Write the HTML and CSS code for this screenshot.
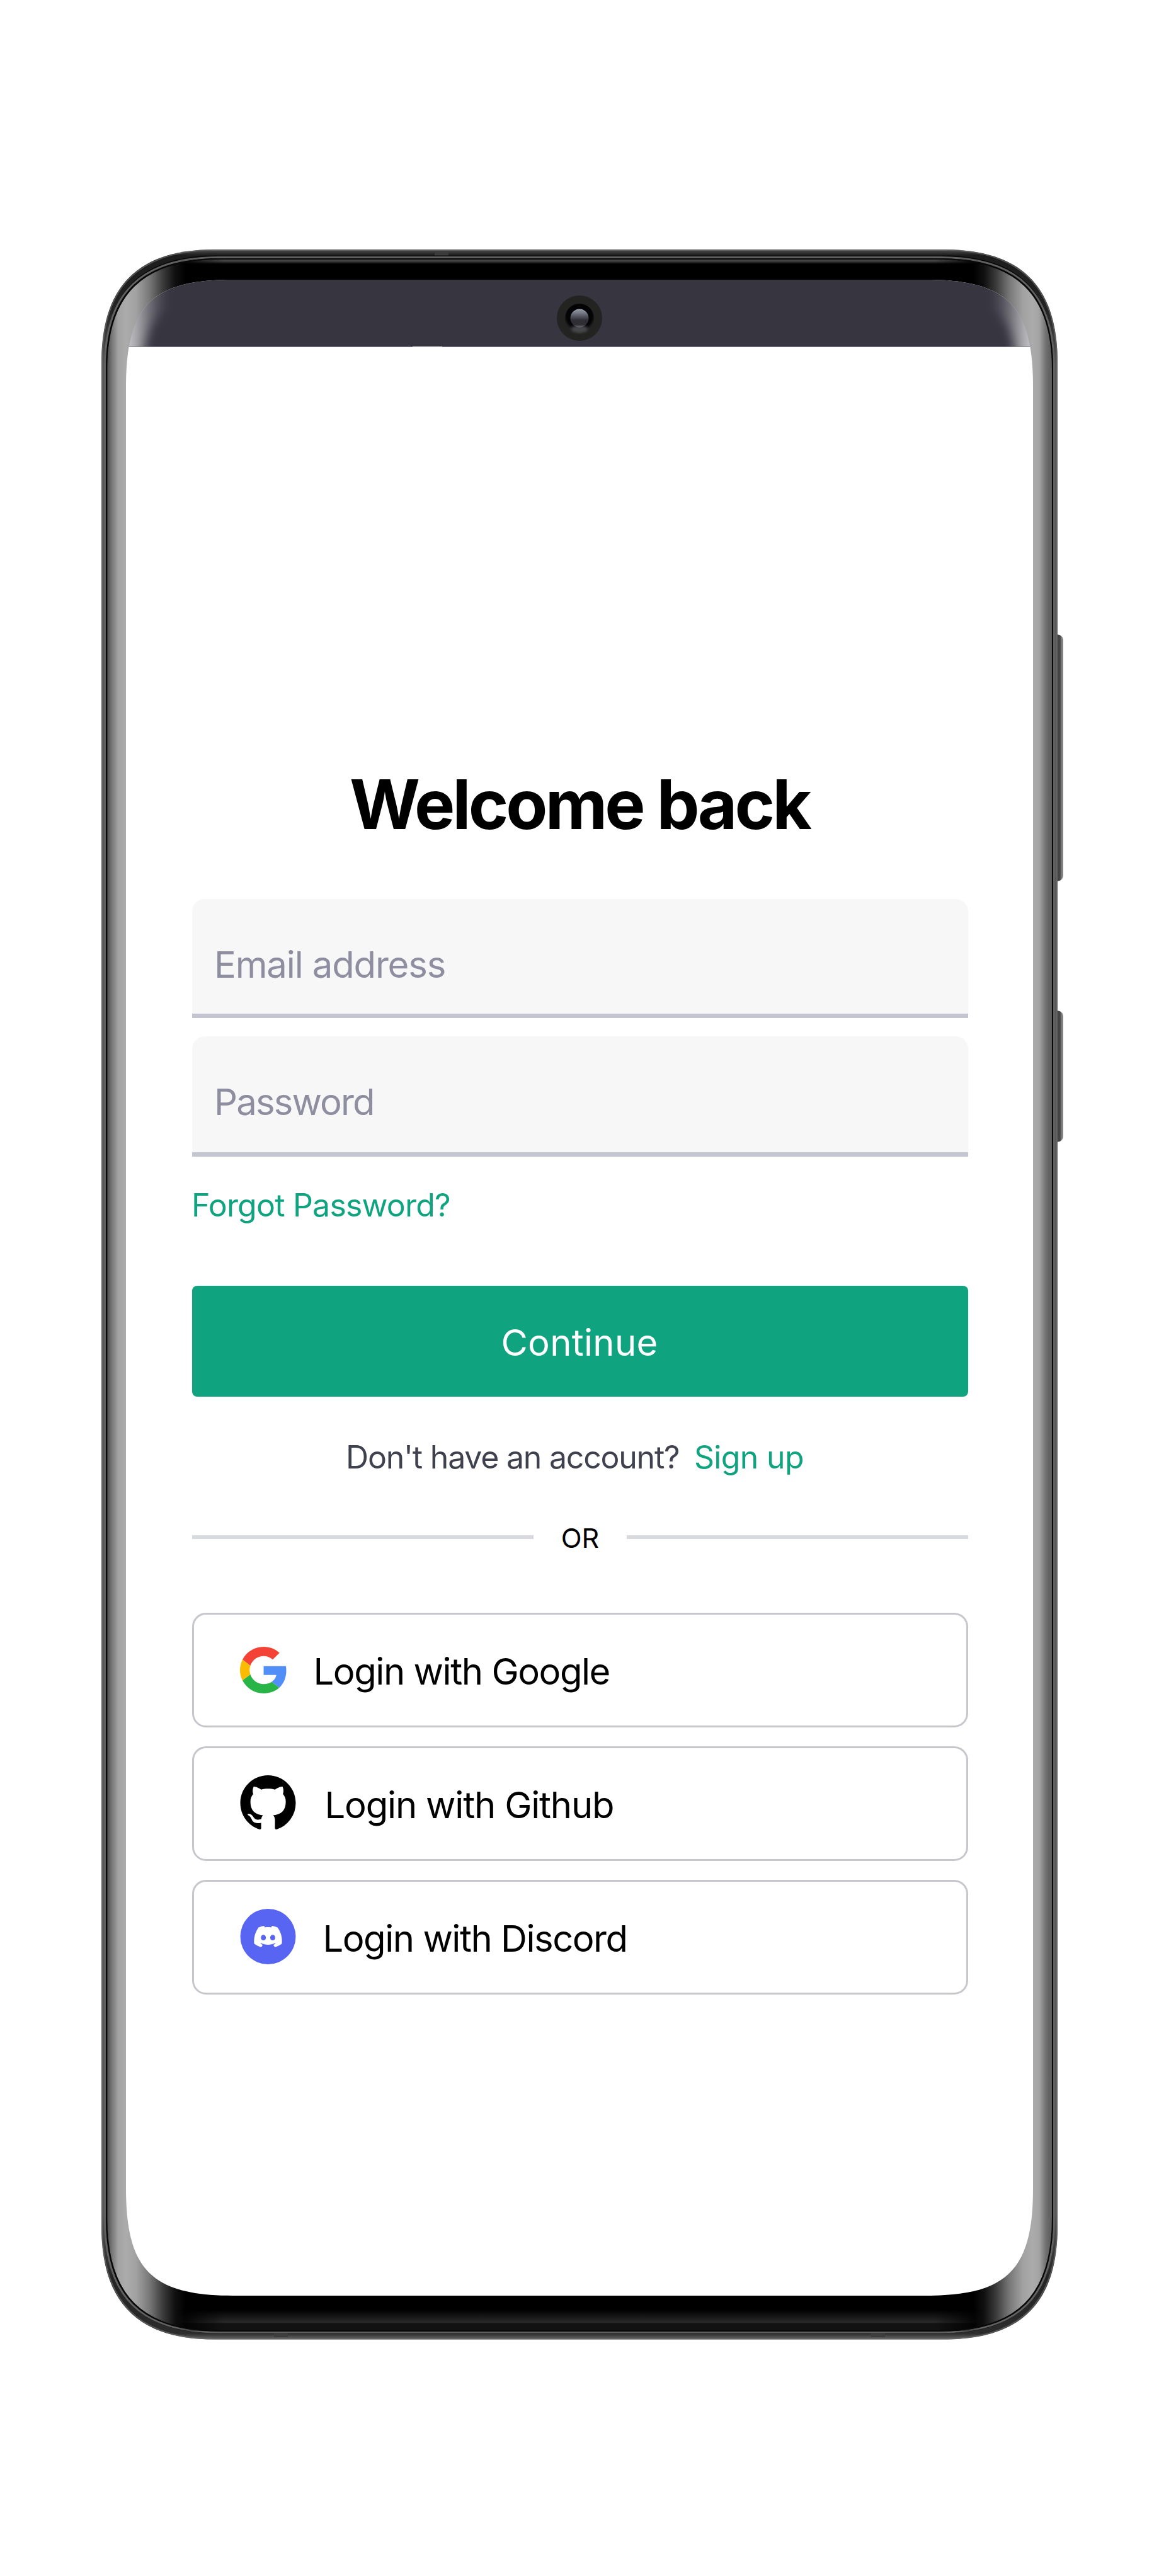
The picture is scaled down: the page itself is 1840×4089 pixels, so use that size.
FILE: index.html
```html
<!DOCTYPE html>
<html lang="en">
<head>
<meta charset="utf-8">
<title>Welcome back</title>
<link rel="stylesheet" href="styles.css">
</head>
<body>
<div class="device">
  <svg class="device-frame" viewBox="0 0 1840 4089" width="1840" height="4089" aria-hidden="true">
    <defs>
      <linearGradient id="glass" gradientUnits="userSpaceOnUse" x1="161" y1="0" x2="1679" y2="0">
        <stop offset="0.006" stop-color="#4c4c4c"/>
        <stop offset="0.011" stop-color="#777"/>
        <stop offset="0.0175" stop-color="#a3a3a3"/>
        <stop offset="0.026" stop-color="#ababab"/>
        <stop offset="0.036" stop-color="#a2a2a2"/>
        <stop offset="0.05" stop-color="#797979"/>
        <stop offset="0.064" stop-color="#3c3c3c"/>
        <stop offset="0.077" stop-color="#101010"/>
        <stop offset="0.088" stop-color="#000"/>
        <stop offset="0.912" stop-color="#000"/>
        <stop offset="0.923" stop-color="#101010"/>
        <stop offset="0.936" stop-color="#3c3c3c"/>
        <stop offset="0.95" stop-color="#797979"/>
        <stop offset="0.964" stop-color="#a2a2a2"/>
        <stop offset="0.974" stop-color="#ababab"/>
        <stop offset="0.981" stop-color="#a3a3a3"/>
        <stop offset="0.988" stop-color="#6f6f6f"/>
        <stop offset="0.994" stop-color="#5a5a5a"/>
      </linearGradient>
      <linearGradient id="rim" gradientUnits="userSpaceOnUse" x1="0" y1="396" x2="0" y2="3714">
        <stop offset="0" stop-color="#505050"/>
        <stop offset="0.0028" stop-color="#1c1c1c"/>
        <stop offset="0.03" stop-color="#242424"/>
        <stop offset="0.055" stop-color="#585858"/>
        <stop offset="0.94" stop-color="#585858"/>
        <stop offset="0.97" stop-color="#242424"/>
        <stop offset="0.997" stop-color="#2c2c2c"/>
        <stop offset="1" stop-color="#6c6c6c"/>
      </linearGradient>
      <linearGradient id="topGlow" x1="0" y1="0" x2="0" y2="1">
        <stop offset="0" stop-color="#4a4a4a"/>
        <stop offset="0.45" stop-color="#404040"/>
        <stop offset="1" stop-color="#000"/>
      </linearGradient>
      <linearGradient id="bottomGlow" x1="0" y1="0" x2="0" y2="1">
        <stop offset="0" stop-color="#000"/>
        <stop offset="0.62" stop-color="#2b2b2b"/>
        <stop offset="0.64" stop-color="#121212"/>
        <stop offset="1" stop-color="#121212"/>
      </linearGradient>
      <linearGradient id="glowEnds" gradientUnits="userSpaceOnUse" x1="280" y1="0" x2="1560" y2="0">
        <stop offset="0" stop-color="#fff" stop-opacity="0"/>
        <stop offset="0.06" stop-color="#fff"/>
        <stop offset="0.94" stop-color="#fff"/>
        <stop offset="1" stop-color="#fff" stop-opacity="0"/>
      </linearGradient>
      <mask id="glowMask" maskUnits="userSpaceOnUse" x="280" y="400" width="1280" height="3310">
        <rect x="280" y="400" width="1280" height="3310" fill="url(#glowEnds)"/>
      </mask>
      <linearGradient id="edgeFade" gradientUnits="userSpaceOnUse" x1="200" y1="0" x2="1640" y2="0">
        <stop offset="0" stop-color="#fff" stop-opacity="0.75"/>
        <stop offset="0.015" stop-color="#fff" stop-opacity="0.5"/>
        <stop offset="0.028" stop-color="#fff" stop-opacity="0.24"/>
        <stop offset="0.045" stop-color="#fff" stop-opacity="0"/>
        <stop offset="0.955" stop-color="#fff" stop-opacity="0"/>
        <stop offset="0.972" stop-color="#fff" stop-opacity="0.24"/>
        <stop offset="0.985" stop-color="#fff" stop-opacity="0.5"/>
        <stop offset="1" stop-color="#fff" stop-opacity="0.75"/>
      </linearGradient>
      <linearGradient id="key" x1="0" y1="0" x2="1" y2="0">
        <stop offset="0" stop-color="#3c3c3c"/>
        <stop offset="0.6" stop-color="#474747"/>
        <stop offset="0.72" stop-color="#777"/>
        <stop offset="1" stop-color="#8a8a8a"/>
      </linearGradient>
      <linearGradient id="lens" x1="0" y1="0" x2="0" y2="1">
        <stop offset="0" stop-color="#9ba3ae"/>
        <stop offset="0.25" stop-color="#70727e"/>
        <stop offset="0.6" stop-color="#302f37"/>
        <stop offset="0.85" stop-color="#2c2c31"/>
        <stop offset="1" stop-color="#6c6c71"/>
      </linearGradient>
      <radialGradient id="lensRing" cx="0.5" cy="0.4" r="0.6">
        <stop offset="0" stop-color="#000"/>
        <stop offset="0.75" stop-color="#050508"/>
        <stop offset="1" stop-color="#2c2d2c"/>
      </radialGradient>
      <filter id="soft" x="-5%" y="-5%" width="110%" height="110%"><feGaussianBlur stdDeviation="8"/></filter>
      <filter id="softer" x="-60%" y="-60%" width="220%" height="220%"><feGaussianBlur stdDeviation="2"/></filter>
      <clipPath id="screenClip"><path id="screenShape" d="M200 614C200 485 241 444 370 444H1470C1599 444 1640 485 1640 614V3474C1640 3603 1599 3644 1470 3644H370C241 3644 200 3603 200 3474Z"/></clipPath>
      <clipPath id="barClip"><path d="M180 444H1660V550H180Z"/></clipPath>
    </defs>

    <path d="M1676 1007C1684 1007 1688 1011 1688 1017V1389C1688 1395 1684 1399 1676 1399Z" fill="url(#key)"/>
    <path d="M1676 1604C1684 1604 1688 1608 1688 1614V1803C1688 1809 1684 1813 1676 1813Z" fill="url(#key)"/>

    <path d="M161 576C161 454 219 396 341 396H1499C1621 396 1679 454 1679 576V3533.5C1679 3655.500 1621 3713.500 1499 3713.500H341C219 3713.500 161 3655.500 161 3533.500Z" fill="url(#rim)"/>
    <path d="M162 576C162 455 220 397 341 397H1499C1620 397 1678 455 1678 576V3533C1678 3654 1620 3712.500 1499 3712.500H341C220 3712.500 162 3654 162 3533Z" fill="none" stroke="#6a6a6a" stroke-opacity="0.7" stroke-width="2"/>
    <path d="M690 400h22v6h-22zM435 3704h22v6h-22zM1383 3704h22v6h-22z" fill="#3c3c3c"/>
    <path d="M166.500 584C166.500 462 223 405.500 345 405.500H1495C1617 405.500 1674 462 1674 584V3522C1674 3646 1618 3703.500 1495 3703.500H345C222 3703.500 166.500 3646 166.500 3522Z" fill="#080808"/>
    <path d="M166.500 584C166.500 464 225 408.500 347 408.500H1493C1615 408.500 1673.500 464 1673.500 584V3522C1673.500 3646 1617 3702 1493 3702H347C223 3702 166.500 3646 166.500 3522Z" fill="none" stroke="#606060" stroke-width="3"/>
    <path d="M169.300 586C169.300 466 227 411 349 411H1491C1613 411 1671 466 1671 586V3520C1671 3644 1615 3700 1491 3700H349C225 3700 169.300 3644 169.300 3520Z" fill="url(#glass)"/>
    <g mask="url(#glowMask)">
      <rect x="280" y="411" width="1280" height="8" fill="url(#topGlow)"/>
      <rect x="280" y="3666" width="1280" height="34" fill="url(#bottomGlow)"/>
    </g>
    <path d="M169.300 586C169.300 466 227 411 349 411H1491C1613 411 1671 466 1671 586V3520C1671 3644 1615 3700 1491 3700H349C225 3700 169.300 3644 169.300 3520Z" fill="none" stroke="#080808" stroke-width="2"/>

    <use href="#screenShape" fill="#fff"/>
    <g clip-path="url(#screenClip)">
      <rect x="190" y="444" width="1460" height="106" fill="#363540"/>
      <g clip-path="url(#barClip)">
        <use href="#screenShape" fill="none" stroke="url(#edgeFade)" stroke-width="50" filter="url(#soft)"/>
      </g>
      <rect x="200" y="550" width="1440" height="1" fill="#85848c"/>
      <rect x="655" y="549" width="47" height="2" fill="#96959e"/>
    </g>

    <circle cx="920" cy="505" r="36" fill="#232422"/>
    <circle cx="920" cy="505" r="23" fill="url(#lensRing)"/>
    <ellipse cx="920" cy="522" rx="13" ry="6" fill="#55565a" opacity="0.8" filter="url(#softer)"/>
    <circle cx="920" cy="505" r="14.500" fill="url(#lens)"/>
  </svg>

  <main class="screen">
    <h1 class="title">Welcome back</h1>
    <form class="login">
      <input class="field field-email" type="text" placeholder="Email address" aria-label="Email address">
      <input class="field field-password" type="text" placeholder="Password" aria-label="Password">
      <a class="forgot">Forgot Password?</a>
      <button class="continue" type="button">Continue</button>
    </form>
    <p class="signup"><span class="signup-text">Don't have an account?</span><a class="signup-link">Sign up</a></p>
    <div class="divider"><span class="divider-text">OR</span></div>
    <div class="providers">
      <button class="provider google" type="button">
        <svg class="icon-google" viewBox="0 0 47 48" preserveAspectRatio="none" aria-hidden="true">
          <path fill="#f44336" d="M24 9.500c3.540 0 6.710 1.220 9.210 3.600l6.850-6.850C35.900 2.380 30.470 0 24 0 14.620 0 6.510 5.380 2.560 13.220l7.980 6.190C12.430 13.720 17.740 9.500 24 9.500z"/>
          <path fill="#518ef8" d="M46.980 24.550c0-1.570-.15-3.090-.38-4.550H24v9.020h12.940c-.58 2.960-2.260 5.480-4.780 7.180l7.730 6c4.510-4.180 7.090-10.360 7.090-17.650z"/>
          <path fill="#fbbb00" d="M10.530 28.590c-.48-1.450-.76-2.990-.76-4.590s.27-3.140.76-4.590l-7.980-6.190C.92 16.460 0 20.120 0 24c0 3.880.92 7.540 2.560 10.780l7.970-6.190z"/>
          <path fill="#28b446" d="M24 48c6.480 0 11.930-2.130 15.890-5.810l-7.730-6c-2.150 1.450-4.920 2.300-8.160 2.300-6.260 0-11.570-4.220-13.470-9.910l-7.980 6.190C6.510 42.620 14.620 48 24 48z"/>
        </svg>
        <span>Login with Google</span>
      </button>
      <button class="provider github" type="button">
        <svg class="icon-round" viewBox="0 0 16 16" aria-hidden="true">
          <path d="M8 0C3.580 0 0 3.580 0 8c0 3.540 2.290 6.530 5.470 7.590.4.07.55-.17.55-.38 0-.19-.01-.82-.01-1.490-2.010.37-2.530-.49-2.690-.94-.09-.23-.48-.94-.82-1.130-.28-.15-.68-.52-.01-.53.63-.01 1.080.58 1.230.82.72 1.210 1.870.87 2.330.66.07-.52.28-.87.51-1.070-1.780-.2-3.640-.89-3.640-3.950 0-.87.31-1.590.82-2.150-.08-.2-.36-1.020.08-2.120 0 0 .67-.21 2.200.82.64-.18 1.320-.27 2-.27s1.360.09 2 .27c1.530-1.040 2.200-.82 2.200-.82.44 1.100.16 1.920.08 2.120.51.56.82 1.270.82 2.150 0 3.070-1.870 3.750-3.650 3.950.29.25.54.73.54 1.480 0 1.070-.01 1.930-.01 2.200 0 .21.15.46.55.38A8.010 8.010 0 0 0 16 8c0-4.420-3.580-8-8-8z"/>
        </svg>
        <span>Login with Github</span>
      </button>
      <button class="provider discord" type="button">
        <svg class="icon-round" viewBox="0 0 89 89" aria-hidden="true">
          <circle cx="44.500" cy="44.500" r="44.500" fill="#5865f2"/>
          <path transform="translate(22.100 22) scale(1.870)" fill="#fff" d="M20.317 4.3698a19.7913 19.7913 0 00-4.8851-1.5152.0741.0741 0 00-.0785.0371c-.211.3753-.4447.8648-.6083 1.2495-1.8447-.2762-3.68-.2762-5.4868 0-.1636-.3933-.4058-.8742-.6177-1.2495a.077.077 0 00-.0785-.037 19.7363 19.7363 0 00-4.8852 1.515.0699.0699 0 00-.0321.0277C.5334 9.0458-.319 13.5799.0992 18.0578a.0824.0824 0 00.0312.0561c2.0528 1.5076 4.0413 2.4228 5.9929 3.0294a.0777.0777 0 00.0842-.0276c.4616-.6304.8731-1.2952 1.226-1.9942a.076.076 0 00-.0416-.1057c-.6528-.2476-1.2743-.5495-1.8722-.8923a.077.077 0 01-.0076-.1277c.1258-.0943.2517-.1923.3718-.2914a.0743.0743 0 01.0776-.0105c3.9278 1.7933 8.18 1.7933 12.0614 0a.0739.0739 0 01.0785.0095c.1202.099.246.1981.3728.2924a.077.077 0 01-.0066.1276 12.2986 12.2986 0 01-1.873.8914.0766.0766 0 00-.0407.1067c.3604.698.7719 1.3628 1.225 1.9932a.076.076 0 00.0842.0286c1.961-.6067 3.9495-1.5219 6.0023-3.0294a.077.077 0 00.0313-.0552c.5004-5.177-.8382-9.6739-3.5485-13.6604a.061.061 0 00-.0312-.0286zM8.02 15.3312c-1.1825 0-2.1569-1.0857-2.1569-2.419 0-1.3332.9555-2.4189 2.157-2.4189 1.2108 0 2.1757 1.0952 2.1568 2.419 0 1.3332-.9555 2.4189-2.1569 2.4189zm7.9748 0c-1.1825 0-2.1569-1.0857-2.1569-2.419 0-1.3332.9554-2.4189 2.1569-2.4189 1.2108 0 2.1757 1.0952 2.1568 2.419 0 1.3332-.946 2.4189-2.1568 2.4189Z"/>
        </svg>
        <span>Login with Discord</span>
      </button>
    </div>
  </main>
</div>
</body>
</html>
```
FILE: styles.css
```css
* {
  box-sizing: border-box;
}

body {
  margin: 0;
  background: #fff;
  color: #000;
  font-family: Inter, "Liberation Sans", sans-serif;
}

/* The frame and the screen content share one grid cell. */
.device {
  display: grid;
  width: 1840px;
  height: 4089px;
}

.device-frame,
.screen {
  grid-area: 1 / 1;
}

.screen {
  display: flex;
  flex-direction: column;
  padding: 1207px 303px 0 305px;
}

.title {
  margin: 0 0 80px;
  padding-right: 2px;
  font-size: 108px;
  font-weight: 700;
  line-height: 140px;
  letter-spacing: -3.9px;
  text-align: center;
}

.login {
  display: flex;
  flex-direction: column;
}

.field {
  width: 100%;
  height: 189px;
  margin: 0 0 29px;
  padding: 26px 35px 0;
  border: 0;
  border-bottom: 7px solid #c5c5d2;
  border-radius: 20px 20px 0 0;
  outline: 0;
  background: #f7f7f8;
  background-clip: padding-box;
  font-family: inherit;
  font-size: 58px;
}

.field::placeholder {
  color: #8e8ea0;
  opacity: 1;
}

.field-email {
  letter-spacing: -1.15px;
}

.field-password {
  height: 191px;
  margin-bottom: 47px;
  padding-top: 24px;
  letter-spacing: -1.85px;
}

.forgot {
  margin-bottom: 98px;
  color: #10a37f;
  font-size: 50px;
  line-height: 60px;
  letter-spacing: -0.8px;
  text-indent: -1px;
}

.continue {
  height: 176px;
  padding: 3px 2px 0 0;
  border: 0;
  border-radius: 8px;
  background: #10a37f;
  color: #fff;
  font-family: inherit;
  font-size: 58px;
  letter-spacing: 0.3px;
}

.signup {
  display: flex;
  justify-content: center;
  gap: 23.5px;
  margin: 66px 0 0;
  padding-right: 17px;
  font-size: 50px;
  line-height: 60px;
}

.signup-text {
  color: #40414f;
  letter-spacing: -1.22px;
}

.signup-link {
  color: #10a37f;
  letter-spacing: -0.67px;
}

.divider {
  display: flex;
  align-items: center;
  height: 50px;
  margin-top: 72px;
}

.divider::before,
.divider::after {
  content: "";
  flex: 1;
  height: 6px;
  background: #d9d9e0;
}

.divider-text {
  width: 148px;
  padding-top: 2px;
  font-size: 43px;
  line-height: 50px;
  text-align: center;
}

.providers {
  display: flex;
  flex-direction: column;
  gap: 30px;
  margin-top: 95px;
}

.provider {
  display: flex;
  align-items: center;
  height: 182px;
  padding: 3px 0 0 73px;
  border: 3px solid #c6c6cc;
  border-radius: 22px;
  background: #fff;
  color: #000;
  font-family: inherit;
  font-size: 58px;
}

.icon-google {
  width: 73.5px;
  height: 74px;
  margin-top: -4px;
  margin-right: 43px;
}

.icon-round {
  width: 89px;
  height: 88px;
  margin-top: -5px;
  margin-right: 45.5px;
}

.google {
  letter-spacing: -1.45px;
}

.github {
  letter-spacing: -1.2px;
}

.discord {
  letter-spacing: -1.48px;
}

.discord .icon-round {
  margin-right: 42.5px;
}
```
